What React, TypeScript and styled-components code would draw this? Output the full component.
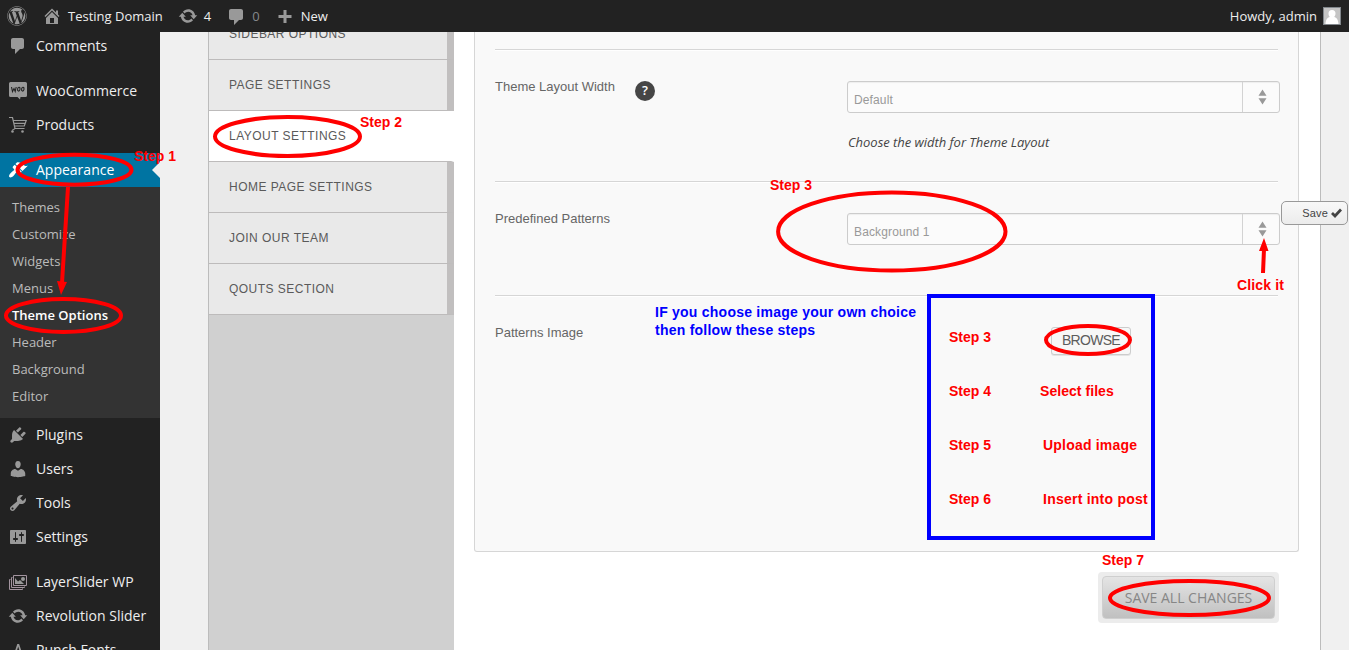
import React from "react";
import styled, { createGlobalStyle, css } from "styled-components";
import { FaWordpress } from "react-icons/fa";

const GlobalStyle = createGlobalStyle`
  * { box-sizing: border-box; }
  html, body { margin: 0; padding: 0; }
  body { background: #f0f0f0; font-family: "Open Sans", sans-serif; overflow: hidden; }
`;

const arial = '"Liberation Sans", Arial, sans-serif';

const Page = styled.div`
  position: relative;
  width: 1349px;
  height: 650px;
  overflow: hidden;
  display: flex;
  flex-direction: column;
`;

/* ---------- admin bar ---------- */

const AdminBar = styled.header`
  flex: none;
  height: 32px;
  background: #222;
  color: #eee;
  display: flex;
  align-items: center;
  padding: 0 8px 0 7px;
  font-size: 13px;
  line-height: 32px;
`;

const BarItem = styled.div<{ $left: number; $gap: number; $dim?: boolean }>`
  display: flex;
  align-items: center;
  margin-left: ${(p) => p.$left}px;
  gap: ${(p) => p.$gap}px;
  color: ${(p) => (p.$dim ? "#85888b" : "#eee")};
  white-space: nowrap;
`;

const Account = styled.div`
  margin-left: auto;
  display: flex;
  align-items: center;
  gap: 6px;
`;

const Avatar = styled.svg`
  width: 18px;
  height: 18px;
  border: 1px solid #82878c;
  background: #c5c5c5;
`;

/* ---------- left menu ---------- */

const Body = styled.div`
  flex: 1;
  min-height: 0;
  display: flex;
  overflow: hidden;
`;

const Sidebar = styled.nav`
  flex: none;
  width: 160px;
  background: #222;
  overflow: hidden;
`;

const MenuList = styled.div`
  margin-top: -3px;
`;

const MenuItem = styled.div<{ $active?: boolean; $spaced?: boolean }>`
  position: relative;
  height: 34px;
  padding-left: 8px;
  margin-top: ${(p) => (p.$spaced ? 11 : 0)}px;
  display: flex;
  align-items: center;
  gap: 8px;
  font-size: 14px;
  color: ${(p) => (p.$active ? "#fff" : "#eee")};
  background: ${(p) => (p.$active ? "#0074a2" : "transparent")};
  white-space: nowrap;
  ${(p) =>
    p.$active &&
    css`
      &::after {
        content: "";
        position: absolute;
        right: 0;
        top: 9px;
        border: 8px solid transparent;
        border-right-color: #f0f0f0;
        border-left-width: 0;
      }
    `}
`;

const MenuText = styled.span`
  padding-bottom: 2px;
`;

const Submenu = styled.div`
  background: #333;
  padding: 7px 0 8px;
`;

const SubItem = styled.div<{ $current?: boolean }>`
  height: 27px;
  line-height: 27px;
  padding-left: 12px;
  font-size: 13px;
  font-weight: ${(p) => (p.$current ? 600 : 400)};
  color: ${(p) => (p.$current ? "#fff" : "#bbb")};
`;

const Glyph = styled.svg<{ $color?: string }>`
  flex: none;
  width: 20px;
  height: 20px;
  fill: ${(p) => p.$color || "#999"};
`;

/* ---------- options frame ---------- */

const Frame = styled.main`
  width: 1113px;
  margin-left: 48px;
  border: solid #bcbcbc;
  border-width: 0 1px;
  background: #fff;
  display: flex;
`;

const Tabs = styled.div`
  flex: none;
  width: 245px;
  background: #d0d0d0;
  overflow: hidden;
`;

const TabList = styled.div`
  margin-top: -23px;
`;

const Tab = styled.div<{ $active?: boolean }>`
  height: 51px;
  padding-left: 20px;
  font: 12px/50px ${arial};
  letter-spacing: 0.47px;
  color: #5a5a5a;
  background: ${(p) => (p.$active ? "#fff" : "#e9e9e9")};
  border-bottom: 1px solid #bdbbbb;
  border-right: ${(p) => (p.$active ? "3px solid #fff" : "7px solid #c1bfbf")};
`;

const Content = styled.div`
  flex: 1;
  padding: 0 21px 0 20px;
  display: flex;
  flex-direction: column;
`;

const Card = styled.section`
  width: 825px;
  height: 520px;
  border: 1px solid #d6d6d6;
  border-top: 0;
  border-radius: 0 0 3px 3px;
  background: #f9f9f9;
  padding: 17px 20px 0;
`;

const OptionRow = styled.div<{ $height: number }>`
  height: ${(p) => p.$height}px;
  border-top: 1px solid #d6d6d6;
  box-shadow: inset 0 1px 0 #fff;
  padding-top: 31px;
  display: flex;
  align-items: flex-start;
`;

const LabelCell = styled.div`
  flex: none;
  width: 352px;
  display: flex;
  align-items: flex-start;
  gap: 20px;
`;

const Label = styled.label`
  margin-top: -1px;
  font: 13px/14px ${arial};
  color: #666;
  white-space: nowrap;
`;

const Help = styled.span`
  width: 20px;
  height: 20px;
  border-radius: 50%;
  background: #464646;
  color: #fff;
  font: 600 13px/19px "Open Sans", sans-serif;
  text-align: center;
`;

const Field = styled.div`
  flex: none;
  width: 433px;
`;

const Select = styled.div`
  width: 433px;
  height: 32px;
  border: 1px solid #ccc;
  border-radius: 3px;
  background: #fbfbfb;
  box-shadow: inset 0 1px 1px #eee;
  display: flex;
  justify-content: space-between;
`;

const SelectValue = styled.span`
  padding-left: 6px;
  font: 12px/36px ${arial};
  letter-spacing: 0.13px;
  color: #999;
`;

const Stepper = styled.span`
  width: 37px;
  border-left: 1px solid #d3d3d3;
  display: flex;
  align-items: center;
  justify-content: center;
  padding-left: 3px;
`;

const Hint = styled.p`
  margin: 20px 0 0 1px;
  font: italic 13px/18px "Open Sans", sans-serif;
  letter-spacing: -0.03px;
  color: #444;
  white-space: nowrap;
`;

const Browse = styled.button`
  display: block;
  margin: 0 0 0 204px;
  width: 80px;
  height: 28px;
  padding: 0 0 2px;
  border: 1px solid #ccc;
  border-radius: 3px;
  background: #f7f7f7;
  box-shadow: 0 1px 0 #e4e4e4;
  font: 14px/24px ${arial};
  letter-spacing: -0.7px;
  color: #5c5c5c;
`;

const SaveAll = styled.button`
  align-self: flex-end;
  margin: 20px 20px 0 0;
  width: 181px;
  height: 51px;
  padding: 4px;
  border: 0;
  border-radius: 4px;
  background: #ececec;
  display: flex;
`;

const SaveAllFace = styled.span`
  flex: 1;
  border: 1px solid #cfcfcf;
  border-radius: 4px;
  background: linear-gradient(#e4e4e4, #c0c0c0);
  color: #868686;
  font: 14px/41px "Open Sans", sans-serif;
  text-align: center;
`;

const FloatingSave = styled.button`
  position: absolute;
  left: 1281px;
  top: 201px;
  width: 67px;
  height: 24px;
  padding: 0 5px 0 0;
  border: 1px solid #999;
  border-radius: 5px;
  background: linear-gradient(#f8f8f8, #ececec);
  color: #444;
  font: 11px/22px ${arial};
  letter-spacing: 0.2px;
  display: flex;
  align-items: center;
  justify-content: flex-end;
  gap: 3px;
`;

/* ---------- annotations ---------- */

const Marks = styled.svg`
  position: absolute;
  left: 0;
  top: 0;
  width: 1349px;
  height: 650px;
  fill: none;
  stroke: #f00;
  stroke-width: 4;
  pointer-events: none;
`;

const Note = styled.span<{ $x: number; $y: number; $blue?: boolean; $ls?: number }>`
  position: absolute;
  left: ${(p) => p.$x}px;
  top: ${(p) => p.$y}px;
  font: 700 14px/18px ${arial};
  letter-spacing: ${(p) => p.$ls ?? 0}px;
  color: ${(p) => (p.$blue ? "#00f" : "#f00")};
  white-space: pre;
`;

const paths = {
  home: "M16 8.5l1.53 1.53-1.06 1.06L10 4.6l-6.47 6.49-1.06-1.06L10 2.5l4 4v-2h2v4zm-6-2.46l6 5.99V18H4v-5.97zM12 17v-5H8v5h4z",
  update:
    "M10.2 3.28c3.53 0 6.43 2.61 6.92 6h2.08l-3.5 4-3.5-4h2.32c-.45-1.97-2.21-3.45-4.32-3.45-1.45 0-2.73.71-3.54 1.78L4.95 5.66C6.23 4.2 8.11 3.28 10.2 3.28zm-.4 13.44c-3.52 0-6.43-2.61-6.92-6H.8l3.5-4c1.17 1.33 2.33 2.67 3.5 4H5.48c.45 1.97 2.21 3.45 4.32 3.45 1.45 0 2.73-.71 3.54-1.78l1.71 1.95c-1.28 1.46-3.15 2.38-5.25 2.38z",
  comment: "M5 2h9c1.1 0 2 .9 2 2v7c0 1.1-.9 2-2 2h-2l-5 5v-5H5c-1.1 0-2-.9-2-2V4c0-1.1.9-2 2-2z",
  barComment: "M5 3h10c1.100 0 2 .9 2 2v7c0 1.100-.9 2-2 2h-2l-5 5v-5H5c-1.100 0-2-.9-2-2V5c0-1.100.9-2 2-2z",
  plus: "M8.5 4h3v5h5v3h-5v5h-3v-5h-5v-3h5z",
  appearance:
    "M14.48 11.06L7.41 3.99l1.5-1.5c.5-.56 2.3-.47 3.51.32 1.21.8 1.43 1.28 2.91 2.1 1.18.64 2.45 1.26 4.45.85zm-.71.71L6.7 4.7 4.93 6.47c-.39.39-.39 1.02 0 1.41l1.06 1.06c.39.39.39 1.03 0 1.42-.6.6-1.43 1.11-2.21 1.69-.35.26-.7.53-1.01.84C1.43 14.23.4 16.08 1.4 17.07c.99 1 2.84-.03 4.18-1.36.31-.31.58-.66.85-1.02.57-.78 1.08-1.61 1.69-2.21.39-.39 1.02-.39 1.41 0l1.06 1.06c.39.39 1.02.39 1.41 0z",
  plugins:
    "M13.11 4.36L9.87 7.6 8 5.73l3.24-3.24c.35-.34 1.05-.2 1.56.32.52.51.66 1.21.31 1.55zm-8 1.77l.91-1.12 9.01 9.01-1.19.84c-.71.71-2.63 1.16-3.82 1.16H6.14L4.9 17.26c-.59.59-1.54.59-2.12 0-.59-.58-.59-1.53 0-2.12l1.24-1.24v-3.88c0-1.13.4-3.19 1.09-3.89zm7.26 3.97l3.24-3.24c.34-.35 1.04-.21 1.55.31.52.51.66 1.21.31 1.55l-3.24 3.25z",
  users:
    "M10 9.25c-2.27 0-2.73-3.44-2.73-3.44C7 4.02 7.82 2 9.97 2c2.16 0 2.98 2.02 2.71 3.81 0 0-.41 3.44-2.68 3.44zm0 2.57L12.72 10c2.39 0 4.52 2.33 4.52 4.53v2.49s-3.65 1.13-7.24 1.13c-3.65 0-7.24-1.13-7.24-1.13v-2.49c0-2.25 1.94-4.48 4.47-4.48z",
  tools:
    "M16.68 9.77c-1.34 1.34-3.3 1.67-4.95.99l-5.41 6.52c-.99.99-2.59.99-3.58 0s-.99-2.59 0-3.57l6.52-5.42c-.68-1.65-.35-3.61.99-4.95 1.28-1.28 3.12-1.62 4.72-1.06l-2.89 2.89 2.82 2.82 2.86-2.87c.53 1.58.18 3.39-1.08 4.65zM3.81 16.21c.4.39 1.04.39 1.43 0 .4-.4.4-1.04 0-1.43-.39-.4-1.03-.4-1.43 0-.39.39-.39 1.03 0 1.43z",
  settings:
    "M18 16V4c0-.55-.45-1-1-1H3c-.55 0-1 .45-1 1v12c0 .55.45 1 1 1h14c.55 0 1-.45 1-1zM8 11h1c.55 0 1 .45 1 1s-.45 1-1 1H8v1.5c0 .28-.22.5-.5.5s-.5-.22-.5-.5V13H6c-.55 0-1-.45-1-1s.45-1 1-1h1V5.5c0-.28.22-.5.5-.5s.5.22.5.5V11zm5-2h-1c-.55 0-1-.45-1-1s.45-1 1-1h1V5.5c0-.28.22-.5.5-.5s.5.22.5.5V7h1c.55 0 1 .45 1 1s-.45 1-1 1h-1v5.5c0 .28-.22.5-.5.5s-.5-.22-.5-.5V9z",
};

type IconName = keyof typeof paths;

const Icon = ({ name, color }: { name: IconName; color?: string }) => (
  <Glyph viewBox="0 0 20 20" $color={color}>
    <path d={paths[name]} />
  </Glyph>
);

const WooIcon = () => (
  <Glyph viewBox="0 1 20 20">
    <path d="M2.500 1h15A1.500 1.500 0 0 1 19 2.500v12a1.500 1.500 0 0 1-1.500 1.500H12.500l-.5 2.500L9.500 16h-7A1.500 1.500 0 0 1 1 14.500v-12A1.500 1.500 0 0 1 2.500 1z" transform="translate(0 1)" />
    <g fill="none" stroke="#222" strokeWidth="1.100" transform="translate(0 .5)">
      <path d="M3.500 6.500l1 4.500 1.500-3 1.200 3L8.200 6.500" />
      <ellipse cx="10.800" cy="8.700" rx="1.200" ry="1.900" transform="rotate(12 10.800 8.700)" />
      <ellipse cx="14.800" cy="8.700" rx="1.200" ry="1.900" transform="rotate(12 14.800 8.700)" />
    </g>
  </Glyph>
);

const CartIcon = () => (
  <Glyph viewBox="0 0 20 20">
    <path
      d="M1 2.500h3.500L7 13.500h9.500M5.200 5.500h13L16.300 11H6.500M5.800 8.300h11"
      fill="none"
      stroke="#999"
      strokeWidth="1.200"
    />
    <circle cx="4.500" cy="16.500" r="1.300" />
    <circle cx="14.500" cy="16.500" r="1.300" />
    <path d="M4 14.700l3-1.700v1.200l-3 1.500z" />
  </Glyph>
);

const LayersIcon = () => (
  <Glyph viewBox="0 0 20 20">
    <g fill="none" stroke="#a3949f" strokeWidth="1">
      <path d="M5.500 3.500h13v10h-13z" />
      <path d="M4.500 5.500h-1v10h13v-1M2.500 7.500h-1v10h13v-1" />
    </g>
    <path d="M7 12V6l3 3.500 2-1.500 4 4z" />
    <circle cx="15" cy="7" r="2" />
  </Glyph>
);

const FontsIcon = () => (
  <Glyph viewBox="0 0 20 20">
    <path d="M5 17L9.300 4h1.800L15.400 17h-1.900l-1.100-3.500H8L6.900 17zM8.500 12h3.400l-1.700-5.500z" />
  </Glyph>
);

const Arrows = () => (
  <svg width="9" height="16" viewBox="0 0 9 16" fill="#999">
    <path d="M4.500 0.500L8.500 6.800h-8zM4.500 15.500L8.500 9.200h-8z" />
  </svg>
);

const submenu = ["Themes", "Customize", "Widgets", "Menus", "Theme Options", "Header", "Background", "Editor"];
const tabs = [
  "SIDEBAR OPTIONS",
  "PAGE SETTINGS",
  "LAYOUT SETTINGS",
  "HOME PAGE SETTINGS",
  "JOIN OUR TEAM",
  "QOUTS SECTION",
];

const SelectBox = ({ value }: { value: string }) => (
  <Select>
    <SelectValue>{value}</SelectValue>
    <Stepper>
      <Arrows />
    </Stepper>
  </Select>
);

export default function App() {
  return (
    <Page>
      <GlobalStyle />
      <AdminBar>
        <FaWordpress size={20} color="#999" />
        <BarItem $left={15} $gap={6}>
          <Icon name="home" />
          Testing Domain
        </BarItem>
        <BarItem $left={15} $gap={6}>
          <Icon name="update" />4
        </BarItem>
        <BarItem $left={15} $gap={6} $dim>
          <Icon name="barComment" />0
        </BarItem>
        <BarItem $left={15} $gap={6}>
          <Icon name="plus" />
          New
        </BarItem>
        <Account>
          Howdy, admin
          <Avatar viewBox="0 0 16 16">
            <path fill="#fff" d="M8 2a3.500 3.500 0 0 1 3.500 3.500c0 1.500-.6 2.700-1.300 3.400 2.400.6 4 2.600 4.300 7.100h-13c.3-4.500 1.900-6.500 4.300-7.100-.7-.7-1.300-1.900-1.300-3.400A3.500 3.500 0 0 1 8 2z" />
          </Avatar>
        </Account>
      </AdminBar>

      <Body>
        <Sidebar>
          <MenuList>
            <MenuItem><Icon name="comment" /><MenuText>Comments</MenuText></MenuItem>
            <MenuItem $spaced><WooIcon /><MenuText>WooCommerce</MenuText></MenuItem>
            <MenuItem><CartIcon /><MenuText>Products</MenuText></MenuItem>
            <MenuItem $spaced $active><Icon name="appearance" color="#fff" /><MenuText>Appearance</MenuText></MenuItem>
            <Submenu>
              {submenu.map((s) => (
                <SubItem key={s} $current={s === "Theme Options"}>{s}</SubItem>
              ))}
            </Submenu>
            <MenuItem><Icon name="plugins" /><MenuText>Plugins</MenuText></MenuItem>
            <MenuItem><Icon name="users" /><MenuText>Users</MenuText></MenuItem>
            <MenuItem><Icon name="tools" /><MenuText>Tools</MenuText></MenuItem>
            <MenuItem><Icon name="settings" /><MenuText>Settings</MenuText></MenuItem>
            <MenuItem $spaced><LayersIcon /><MenuText>LayerSlider WP</MenuText></MenuItem>
            <MenuItem><Icon name="update" /><MenuText>Revolution Slider</MenuText></MenuItem>
            <MenuItem><FontsIcon /><MenuText>Punch Fonts</MenuText></MenuItem>
          </MenuList>
        </Sidebar>

        <Frame>
          <Tabs>
            <TabList>
              {tabs.map((t) => (
                <Tab key={t} $active={t === "LAYOUT SETTINGS"}>{t}</Tab>
              ))}
            </TabList>
          </Tabs>
          <Content>
            <Card>
              <OptionRow $height={132}>
                <LabelCell>
                  <Label>Theme Layout Width</Label>
                  <Help>?</Help>
                </LabelCell>
                <Field>
                  <SelectBox value="Default" />
                  <Hint>Choose the width for Theme Layout</Hint>
                </Field>
              </OptionRow>
              <OptionRow $height={114}>
                <LabelCell><Label>Predefined Patterns</Label></LabelCell>
                <Field><SelectBox value="Background 1" /></Field>
              </OptionRow>
              <OptionRow $height={200}>
                <LabelCell><Label>Patterns Image</Label></LabelCell>
                <Field><Browse>BROWSE</Browse></Field>
              </OptionRow>
            </Card>
            <SaveAll><SaveAllFace>SAVE ALL CHANGES</SaveAllFace></SaveAll>
          </Content>
        </Frame>
      </Body>

      <FloatingSave>
        Save
        <svg width="11" height="10" viewBox="0 0 11 10">
          <path d="M1 5l3 3L10 1.500" fill="none" stroke="#444" strokeWidth="2.800" />
        </svg>
      </FloatingSave>

      <Marks viewBox="0 0 1349 650">
        <ellipse cx="74.500" cy="169.700" rx="57" ry="15" />
        <ellipse cx="63.500" cy="315.500" rx="57.500" ry="16.500" />
        <ellipse cx="287.500" cy="136.500" rx="72.500" ry="19.500" />
        <ellipse cx="891.800" cy="231.500" rx="113.700" ry="39" />
        <ellipse cx="1088" cy="340" rx="42" ry="14" />
        <ellipse cx="1189.500" cy="598" rx="79.500" ry="17" />
        <path d="M68 187L62 283M1263 273L1264 249" />
        <path d="M57 281l10 1-6 13zM1259 251l5-13 4.500 13z" fill="#f00" stroke="none" />
        <rect x="929" y="296" width="224" height="242" stroke="#00f" />
      </Marks>

      <Note $x={134} $y={147}>Step 1</Note>
      <Note $x={360} $y={113}>Step 2</Note>
      <Note $x={770} $y={176}>Step 3</Note>
      <Note $x={1237} $y={276} $ls={0.15}>Click it</Note>
      <Note $x={655} $y={303} $blue $ls={0.24}>{"IF you choose image your own choice\nthen follow these steps"}</Note>
      <Note $x={949} $y={328}>Step 3</Note>
      <Note $x={949} $y={382}>Step 4</Note>
      <Note $x={1040} $y={382} $ls={0.05}>Select files</Note>
      <Note $x={949} $y={436}>Step 5</Note>
      <Note $x={1043} $y={436} $ls={0.2}>Upload image</Note>
      <Note $x={949} $y={490}>Step 6</Note>
      <Note $x={1043} $y={490} $ls={0.24}>Insert into post</Note>
      <Note $x={1102} $y={551}>Step 7</Note>
    </Page>
  );
}
